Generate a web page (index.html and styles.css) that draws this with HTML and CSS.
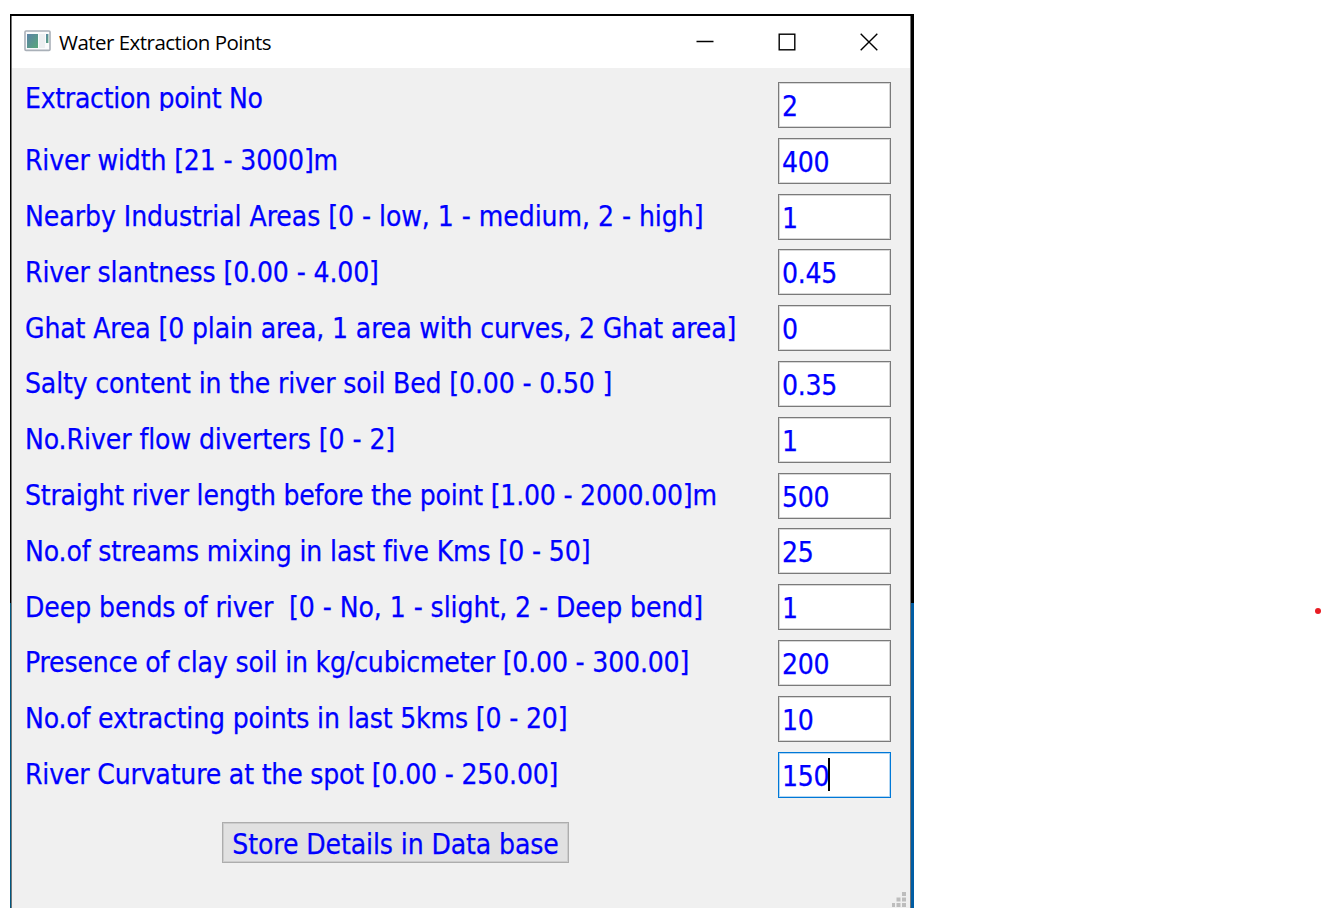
FILE: index.html
```
<!DOCTYPE html>
<html lang="en">
<head>
<meta charset="utf-8">
<title>Water Extraction Points</title>
<link rel="stylesheet" href="styles.css">
</head>
<body>
<main class="window">
<div class="frame">
<header class="titlebar">
<svg class="app-icon" width="28" height="22" viewBox="0 0 28 22">
<defs><linearGradient id="pane" x1="0" y1="0" x2="1" y2="1"><stop offset="0" stop-color="#5b82a8"/><stop offset="1" stop-color="#58a879"/></linearGradient></defs>
<rect x="1" y="1" width="25" height="19.4" rx="1" fill="#fafbfc" stroke="#a9b0b8" stroke-width="1.6"/>
<rect x="3" y="4" width="11" height="14" fill="url(#pane)"/>
<rect x="15" y="4" width="6" height="14" fill="#eceff1"/>
<rect x="22" y="4" width="2.4" height="9" fill="url(#pane)"/>
</svg>
<h1 class="title">Water Extraction Points</h1>
<div class="controls">
<svg width="18" height="18" viewBox="0 0 18 18"><path d="M0.5 8.5H17.5" stroke="#000" stroke-width="1.5"/></svg>
<svg width="18" height="18" viewBox="0 0 18 18"><rect x="1.2" y="1.2" width="15.6" height="15.6" fill="none" stroke="#000" stroke-width="1.4"/></svg>
<svg width="18" height="18" viewBox="0 0 18 18"><path d="M0.7 0.7L17.3 17.3M17.3 0.7L0.7 17.3" stroke="#000" stroke-width="1.4"/></svg>
</div>
</header>
<form class="form">
<label class="row first"><span class="label l1">Extraction point No</span><span class="field">2</span></label>
<label class="row"><span class="label l2">River width [21 - 3000]m</span><span class="field">400</span></label>
<label class="row"><span class="label l3">Nearby Industrial Areas [0 - low, 1 - medium, 2 - high]</span><span class="field">1</span></label>
<label class="row"><span class="label l4">River slantness [0.00 - 4.00]</span><span class="field">0.45</span></label>
<label class="row"><span class="label l5">Ghat Area [0 plain area, 1 area with curves, 2 Ghat area]</span><span class="field">0</span></label>
<label class="row"><span class="label l6">Salty content in the river soil Bed [0.00 - 0.50 ]</span><span class="field">0.35</span></label>
<label class="row"><span class="label l7">No.River flow diverters [0 - 2]</span><span class="field">1</span></label>
<label class="row"><span class="label l8">Straight river length before the point [1.00 - 2000.00]m</span><span class="field">500</span></label>
<label class="row"><span class="label l9">No.of streams mixing in last five Kms [0 - 50]</span><span class="field">25</span></label>
<label class="row"><span class="label l10">Deep bends of river&nbsp; [0 - No, 1 - slight, 2 - Deep bend]</span><span class="field">1</span></label>
<label class="row"><span class="label l11">Presence of clay soil in kg/cubicmeter [0.00 - 300.00]</span><span class="field">200</span></label>
<label class="row"><span class="label l12">No.of extracting points in last 5kms [0 - 20]</span><span class="field">10</span></label>
<label class="row"><span class="label l13">River Curvature at the spot [0.00 - 250.00]</span><span class="field focused">150<i class="caret"></i></span></label>
<button class="store" type="button">Store Details in Data base</button>
</form>
<svg class="grip" width="15" height="16" viewBox="0 0 15 16" fill="#bdbdbd"><path d="M10 0h4v4h-4zM4.500 5.500h4v4h-4zM10 5.500h4v4h-4zM0 11h3v4h-3zM4.500 11h4v4h-4zM10 11h4v4h-4z"/></svg>
</div>
</main>
<div class="dot"></div>
</body>
</html>
```
FILE: styles.css
```
* {
  box-sizing: border-box;
}

body {
  margin: 0;
  background: #fff;
  display: flex;
  justify-content: space-between;
  height: 919px;
  overflow: hidden;
}

.window {
  margin: 14px 0 0 10px;
  width: 904px;
  height: 894px;
  padding: 2px 3px 0 1px;
  background:
    linear-gradient(#000 589px, #005780 589px) left / 50% 100% no-repeat,
    linear-gradient(#000 589px, #005ca3 589px) right / 50% 100% no-repeat;
}

.frame {
  height: 100%;
  display: flex;
  flex-direction: column;
  background: #f0f0f0;
  border: solid #777;
  border-width: 0 1px;
}

.titlebar {
  display: flex;
  align-items: center;
  height: 52px;
  flex: none;
  padding: 0 32px 0 12px;
  background: #fff;
}

.app-icon {
  margin-top: -2px;
}

.title {
  margin: 0 0 0 7px;
  font: 400 20.500px/26px "Open Sans", "Noto Sans", sans-serif;
  letter-spacing: -0.52px;
  color: #000;
}

.controls {
  display: flex;
  gap: 64px;
  margin-left: auto;
  margin-top: -1px;
}

.form {
  flex: 1;
  display: flex;
  flex-direction: column;
  gap: 9.800px;
  padding: 14px 19px 0 13px;
  font: 28px/34px "DejaVu Sans Condensed", "DejaVu Sans", sans-serif;
  font-stretch: condensed;
  color: #00f;
  -webkit-text-stroke: 0.25px #00f;
}

.row {
  display: flex;
  justify-content: space-between;
  align-items: center;
  height: 46px;
  flex: none;
  white-space: nowrap;
}

.label {
  padding-top: 1px;
}

.first {
  align-items: flex-start;
}

/* The first label is too short for its descenders. */
.first .label {
  height: 29px;
  padding-top: 0;
  overflow: hidden;
}

.l1 { letter-spacing: -0.28px; }
.l2 { letter-spacing: -0.13px; }
.l3 { letter-spacing: -0.04px; }
.l4 { letter-spacing: -0.12px; }
.l5 { letter-spacing: -0.12px; }
.l6 { letter-spacing: -0.14px; }
.l7 { letter-spacing: -0.07px; }
.l8 { letter-spacing: -0.2px; }
.l9 { letter-spacing: -0.11px; }
.l10 { letter-spacing: -0.06px; }
.l11 { letter-spacing: -0.17px; }
.l12 { letter-spacing: -0.15px; }
.l13 { letter-spacing: -0.17px; }

.field {
  display: flex;
  align-items: center;
  width: 113px;
  height: 46px;
  padding: 4px 0 0 3px;
  background: #fff;
  border: 1px solid #7a7a7a;
  box-shadow: inset 0 0 0 1px rgba(122, 122, 122, 0.3);
  letter-spacing: -0.3px;
}

.focused {
  border-color: #0078d7;
  box-shadow: inset 0 0 0 1px rgba(0, 120, 215, 0.3);
}

.caret {
  width: 2px;
  height: 33px;
  margin: -5px 0 0 -1px;
  background: #000;
}

.store {
  align-self: flex-start;
  width: 347px;
  height: 41px;
  margin: 15px 0 0 197px;
  padding: 4px 0 0;
  background: #e1e1e1;
  border: 1px solid #adadad;
  box-shadow: inset 0 0 0 1px rgba(173, 173, 173, 0.4);
  font: inherit;
  letter-spacing: -0.1px;
  color: inherit;
  white-space: nowrap;
}

.grip {
  align-self: flex-end;
  margin: 0 3px 0 0;
  flex: none;
}

.dot {
  width: 6px;
  height: 6px;
  margin: 608px 1px 0 0;
  border-radius: 50%;
  background: #e81c23;
}
```
